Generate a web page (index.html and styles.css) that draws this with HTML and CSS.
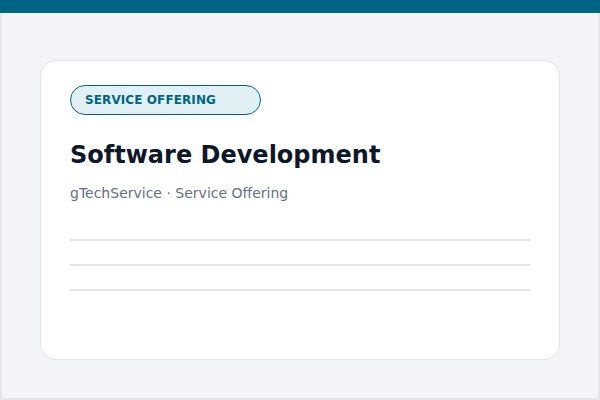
FILE: index.html
```html
<!DOCTYPE html>
<html lang="en">
<head>
    <meta charset="UTF-8">
    <meta name="viewport" content="width=device-width, initial-scale=1.0">
    <title>Software Development</title>
    <link rel="stylesheet" href="styles.css">
</head>
<body>
    <div class="topbar"></div>

    <main class="page">
        <section class="card">
            <span class="badge">Service Offering</span>
            <h1 class="title">Software Development</h1>
            <p class="meta">gTechService &middot; Service Offering</p>

            <div class="rules">
                <hr>
                <hr>
                <hr>
            </div>
        </section>
    </main>
</body>
</html>
```

FILE: styles.css
```css
* {
    box-sizing: border-box;
}
html, body {
    height: 100%;
}
body {
    margin: 0;
    font-family: "DejaVu Sans", sans-serif;
    background-color: #f3f4f8;
    color: #0f172a;
    display: flex;
    flex-direction: column;
}
.topbar {
    height: 13px;
    background-color: #006582;
    flex-shrink: 0;
}
.page {
    flex: 1;
    border: 2px solid #e3e5eb;
    border-top: none;
    padding: 47px 38px 0;
}
.card {
    height: 300px;
    background-color: white;
    border: 1px solid #e2e5eb;
    border-radius: 16px;
    padding: 24px 29px;
}
.badge {
    display: inline-block;
    width: 191px;
    height: 30px;
    padding: 0 14px;
    line-height: 29px;
    font-size: 12px;
    font-weight: bold;
    letter-spacing: 0.1px;
    text-transform: uppercase;
    color: #006582;
    background-color: #e1f0f5;
    border: 1px solid #006582;
    border-radius: 15px;
}
.title {
    margin: 24px 0 0;
    font-size: 24px;
    line-height: 32px;
    color: #0f172a;
}
.meta {
    margin: 14px 0 0;
    font-size: 14px;
    color: #667085;
}
.rules {
    margin-top: 38px;
    display: flex;
    flex-direction: column;
    gap: 23px;
}
.rules hr {
    margin: 0;
    border: none;
    height: 2px;
    background-color: #e2e5eb;
}
```
